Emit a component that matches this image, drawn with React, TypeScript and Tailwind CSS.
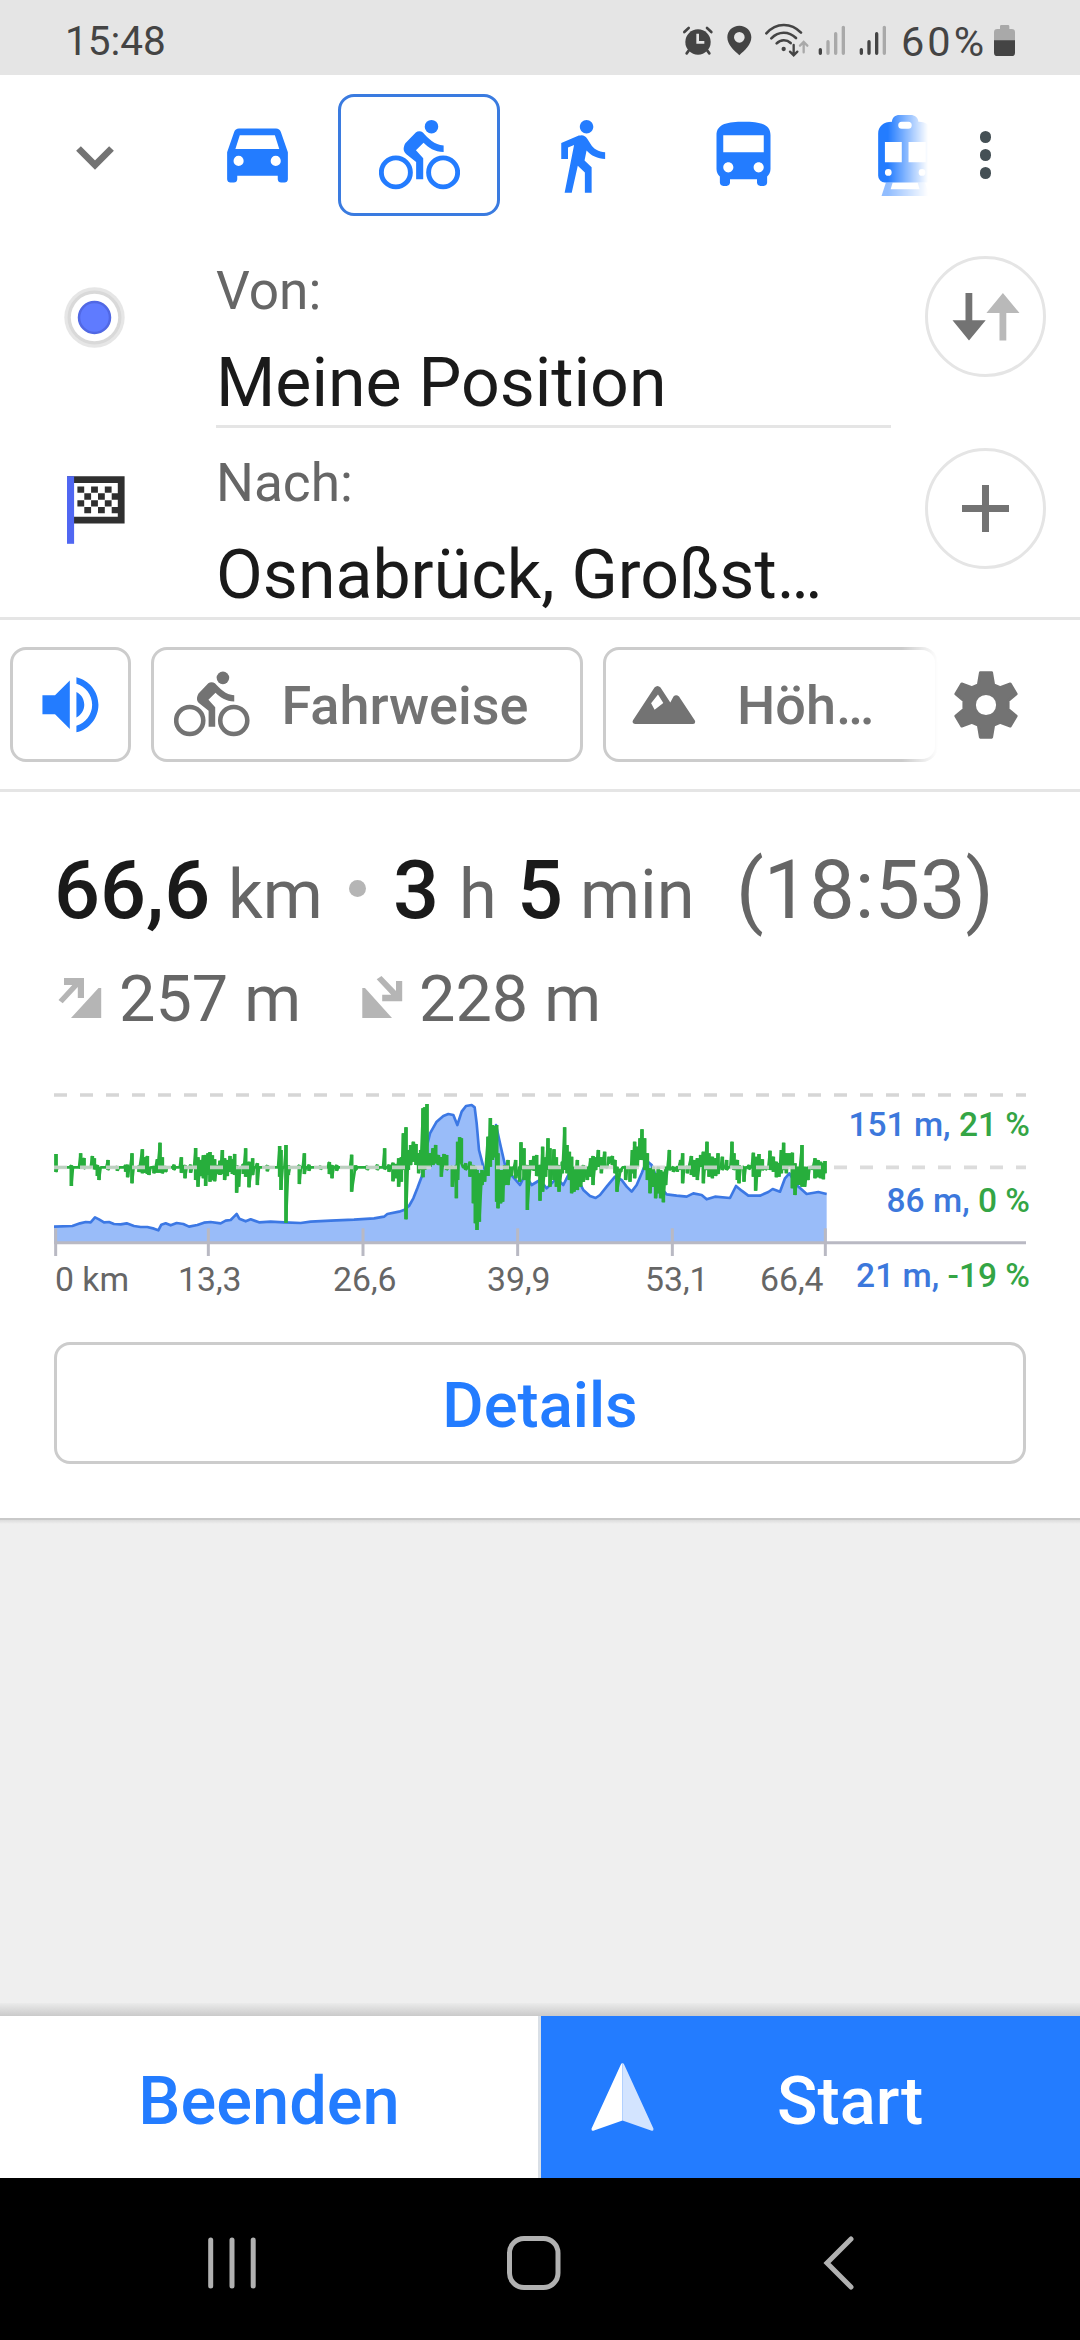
import type { ReactNode } from "react";
import clsx from "clsx";

const BLUE = "#237cff";
const GRAY = "#737373";

// ── Icons ─────────────────────────────────────────────────────────────────────
function Icon({ children, size = 81, color = BLUE }: { children: ReactNode; size?: number; color?: string }) {
  return (
    <svg width={size} height={size} viewBox="0 0 24 24" fill={color} className="shrink-0">
      {children}
    </svg>
  );
}

function CarIcon() {
  return (
    <Icon>
      <path
        fillRule="evenodd"
        d="M18.92 5.01C18.72 4.42 18.16 4 17.5 4h-11c-.66 0-1.21.42-1.42 1.01L3 11v8c0 .55.45 1 1 1h1c.55 0 1-.45 1-1v-1h12v1c0 .55.45 1 1 1h1c.55 0 1-.45 1-1v-8l-2.08-5.99zM6.4 15.1a1.5 1.5 0 1 1 0-3 1.5 1.5 0 0 1 0 3zm11 0a1.5 1.5 0 1 1 0-3 1.5 1.5 0 0 1 0 3zM5.45 10.1 6.75 6h10.4l1.3 4.1z"
      />
    </Icon>
  );
}

function BikeIcon({ size, color }: { size?: number; color?: string }) {
  return (
    <Icon size={size} color={color}>
      <circle cx="5" cy="17" r="4.3" fill="none" stroke={color ?? BLUE} strokeWidth="1.45" />
      <circle cx="19" cy="17" r="4.3" fill="none" stroke={color ?? BLUE} strokeWidth="1.45" />
      <circle cx="15.55" cy="3.45" r="2" />
      <path d="M10.9 5.2c.6-.5 1.5-.5 2.1 0 1.6 1.7 3.4 3.7 6.15 3.8v1.96c-2.7 0-4.5-1.35-5.95-2.76l-2.25 2.25 2.15 2.35V19H11v-5.1l-2.9-2.3c-1-.8-1-1.9-.3-3.2z" />
    </Icon>
  );
}

function WalkIcon() {
  return (
    <Icon>
      <path d="M13.5 5.5c1.1 0 2-.9 2-2s-.9-2-2-2-2 .9-2 2 .9 2 2 2zM9.8 8.9L7 23h2.1l1.8-8 2.1 2v6h2v-7.5l-2.1-2 .6-3C14.8 12 16.8 13 19 13v-2c-1.9 0-3.5-1-4.3-2.4l-1-1.6c-.4-.6-1-1-1.7-1-.3 0-.5.1-.8.1L6 8.3V13h2V9.6l1.8-.7z" />
    </Icon>
  );
}

function BusIcon() {
  return (
    <Icon>
      <path d="M4 16c0 .88.39 1.67 1 2.22V20c0 .55.45 1 1 1h1c.55 0 1-.45 1-1v-1h8v1c0 .55.45 1 1 1h1c.55 0 1-.45 1-1v-1.78c.61-.55 1-1.34 1-2.22V6c0-3.5-3.58-4-8-4s-8 .5-8 4v10zm3.5 1c-.83 0-1.5-.67-1.5-1.5S6.67 14 7.5 14s1.5.67 1.5 1.5S8.33 17 7.5 17zm9 0c-.83 0-1.5-.67-1.5-1.5s.67-1.5 1.5-1.5 1.5.67 1.5 1.5-.67 1.5-1.5 1.5zm1.5-6H6V6h12v5z" />
    </Icon>
  );
}

function TramIcon() {
  return (
    <Icon>
      <path d="M6.2 20 4.9 24h14.2l-1.3-4h-2.2l.6 2H7.6l.6-2z" opacity=".5" />
      <path
        fillRule="evenodd"
        d="M8 2C8 .8 9 0 10.2 0h3.3c1.2 0 2.3.8 2.3 2H16c2.4 0 4 1.6 4 4v12a2 2 0 0 1-2 2H5.9a2 2 0 0 1-2-2V5.5C3.9 3.4 5.5 2 8 2zM10.9 2a1 1 0 0 0 0 2.1h1.9a1 1 0 0 0 0-2.1zM5.9 8v6h5V8zm7 0v6H18V8zM6.9 16a1 1 0 1 0 0 2 1 1 0 0 0 0-2zm10 0a1 1 0 1 0 0 2 1 1 0 0 0 0-2z"
      />
    </Icon>
  );
}

function StatusIcons() {
  return (
    <svg width="207" height="36" viewBox="125 67 621 108" className="shrink-0">
      {/* alarm */}
      <g stroke="#444" strokeLinecap="round" fill="none">
        <path d="M132 97 145 85M213 97 200 85" strokeWidth="8" />
        <path d="M145 153 139 161M201 153 207 161" strokeWidth="8" />
      </g>
      <circle cx="173" cy="127" r="38" fill="#444" />
      <path d="M172 102v26h20" fill="none" stroke="#e5e5e5" strokeWidth="8" />
      {/* location */}
      <path
        fill="#444"
        fillRule="evenodd"
        d="M297 78c-20 0-36 15-36 35 0 23 20 39 36 54 16-15 36-31 36-54 0-20-16-35-36-35zm0 19a16 16 0 1 1 0 32 16 16 0 0 1 0-32z"
      />
      {/* wifi */}
      <g fill="none" stroke="#444" strokeWidth="8" strokeLinecap="round">
        <path d="M378 101C408 68 452 68 482 99" />
        <path d="M393 116C415 94 445 94 467 115" />
        <path d="M409 131C421 119 439 119 451 130" />
        <path d="M460 136v28M449 156l11 11 11-11" strokeWidth="7" />
        <path d="M490 158v-30M479 138l11-11 11 11" stroke="#a9a9a9" strokeWidth="7" />
      </g>
      <circle cx="430" cy="148" r="6.5" fill="#444" />
      {/* signal strength, both sims */}
      <g strokeWidth="10" strokeLinecap="round">
        <path d="M540 150v11M663 150v11M686 126v35M709 102v59" stroke="#444" />
        <path d="M563 126v35M586 102v59M609 83v78M732 83v78" stroke="#a9a9a9" />
      </g>
    </svg>
  );
}

function BatteryIcon() {
  return (
    <svg width="21" height="31" viewBox="0 0 63 93" className="shrink-0">
      <path d="M0 22q0-10 10-10h8V4q0-4 4-4h20q4 0 4 4v8h7q10 0 10 10v26H0z" fill="#a9a9a9" />
      <path d="M0 46h63v37q0 10-10 10H10Q0 93 0 83z" fill="#444" />
    </svg>
  );
}

// ── Elevation profile ─────────────────────────────────────────────────────────
const ELEVATION: [number, number][] = [
  [0, 470], [55, 468], [78, 460], [95, 456], [110, 457], [123, 442], [135, 448], [150, 457], [165, 456], [180, 462],
  [200, 463], [218, 460], [240, 468], [260, 471], [280, 471], [300, 476], [313, 481], [322, 464], [335, 460],
  [350, 466], [368, 459], [388, 462], [405, 470], [430, 465], [450, 458], [470, 456], [500, 460], [515, 452],
  [530, 450], [540, 440], [548, 432], [556, 446], [575, 454], [590, 448], [615, 457], [650, 455], [690, 457],
  [740, 459], [770, 455], [830, 452], [900, 449], [960, 445], [990, 440], [1000, 432], [1035, 425], [1050, 420],
  [1065, 408], [1078, 385], [1090, 355], [1103, 320], [1116, 240], [1128, 190], [1148, 155], [1168, 138],
  [1183, 132], [1198, 135], [1210, 165], [1223, 125], [1236, 108], [1253, 105], [1262, 112], [1268, 160],
  [1275, 240], [1288, 290], [1296, 305], [1306, 280], [1316, 220], [1326, 165], [1338, 220], [1353, 285],
  [1368, 310], [1398, 345], [1413, 315], [1433, 345], [1458, 330], [1478, 355], [1508, 325], [1528, 345],
  [1548, 305], [1568, 320], [1588, 360], [1608, 378], [1625, 384], [1638, 375], [1658, 350], [1683, 320],
  [1703, 330], [1718, 350], [1733, 365], [1748, 345], [1763, 310], [1778, 272], [1793, 285], [1818, 350],
  [1838, 373], [1868, 377], [1898, 380], [1918, 370], [1943, 375], [1958, 388], [1983, 380], [2028, 384],
  [2046, 348], [2063, 362], [2083, 377], [2118, 377], [2143, 366], [2156, 357], [2178, 365], [2193, 325],
  [2206, 310], [2228, 345], [2258, 372], [2293, 366], [2318, 372],
];

// x, highest and lowest slope at that point
const SLOPE: [number, number, number][] = [
  [6, 252, 306], [52, 286, 348], [80, 250, 296], [90, 264, 296], [115, 258, 292], [121, 265, 298], [130, 285, 318],
  [135, 290, 330], [162, 270, 300], [190, 290, 302], [215, 285, 305], [221, 284, 322], [234, 250, 340],
  [255, 288, 306], [265, 238, 310], [271, 262, 308], [280, 258, 312], [285, 290, 315], [300, 290, 310],
  [310, 268, 308], [318, 218, 308], [325, 262, 310], [335, 288, 306], [360, 284, 300], [382, 262, 308],
  [393, 285, 325], [410, 284, 308], [425, 234, 330], [432, 262, 350], [440, 270, 318], [448, 256, 325],
  [455, 255, 348], [462, 250, 315], [468, 246, 335], [475, 256, 330], [482, 268, 334], [490, 285, 312],
  [498, 272, 315], [505, 240, 312], [512, 265, 330], [520, 270, 318], [528, 258, 305], [535, 268, 312],
  [542, 252, 315], [548, 285, 368], [554, 295, 350], [568, 282, 312], [575, 235, 320], [585, 275, 352],
  [596, 265, 315], [610, 280, 345], [640, 286, 304], [677, 228, 320], [681, 240, 360], [696, 225, 458],
  [703, 285, 315], [736, 285, 342], [751, 250, 312], [765, 284, 302], [800, 288, 298], [826, 276, 312],
  [834, 285, 325], [848, 285, 302], [893, 254, 365], [905, 286, 300], [940, 288, 300], [970, 284, 300],
  [992, 235, 298], [1005, 284, 305], [1017, 278, 334], [1027, 282, 325], [1034, 265, 350], [1042, 262, 335],
  [1048, 190, 300], [1056, 172, 448], [1063, 240, 300], [1070, 225, 285], [1078, 215, 275], [1086, 222, 285],
  [1094, 250, 310], [1100, 240, 300], [1107, 115, 322], [1112, 112, 300], [1119, 102, 290], [1128, 250, 290],
  [1137, 235, 285], [1145, 225, 280], [1153, 255, 285], [1162, 262, 320], [1170, 252, 290], [1178, 255, 300],
  [1195, 290, 350], [1207, 285, 385], [1211, 215, 330], [1217, 202, 275], [1222, 205, 280], [1235, 280, 300],
  [1248, 275, 320], [1258, 285, 400], [1264, 290, 460], [1269, 300, 480], [1276, 310, 455], [1284, 300, 345],
  [1292, 305, 335], [1302, 200, 318], [1309, 144, 290], [1315, 165, 270], [1322, 168, 262], [1328, 165, 395],
  [1332, 250, 415], [1340, 300, 400], [1346, 300, 395], [1352, 285, 345], [1362, 270, 345], [1372, 290, 318],
  [1385, 270, 325], [1397, 290, 335], [1401, 217, 300], [1410, 235, 330], [1420, 285, 420], [1430, 270, 300],
  [1440, 258, 302], [1448, 255, 318], [1458, 285, 392], [1466, 230, 365], [1475, 262, 320], [1482, 205, 300],
  [1488, 235, 350], [1500, 238, 330], [1507, 262, 350], [1515, 285, 365], [1525, 275, 310], [1532, 172, 300],
  [1539, 225, 310], [1546, 245, 330], [1553, 260, 370], [1560, 290, 365], [1570, 270, 360], [1580, 290, 350],
  [1588, 285, 335], [1600, 290, 330], [1610, 265, 320], [1617, 258, 345], [1625, 262, 300], [1633, 240, 290],
  [1642, 262, 310], [1652, 245, 290], [1665, 260, 280], [1675, 258, 285], [1683, 270, 310], [1689, 290, 365],
  [1700, 296, 306], [1715, 290, 330], [1728, 295, 335], [1735, 240, 310], [1742, 215, 325], [1750, 230, 290],
  [1758, 205, 270], [1764, 178, 270], [1772, 205, 300], [1780, 250, 330], [1788, 295, 370], [1798, 290, 350],
  [1805, 310, 385], [1813, 290, 370], [1820, 300, 385], [1828, 305, 397], [1835, 290, 345], [1846, 240, 300],
  [1858, 290, 305], [1870, 290, 305], [1880, 270, 300], [1886, 250, 340], [1900, 290, 310], [1912, 258, 315],
  [1920, 270, 320], [1930, 265, 330], [1940, 255, 290], [1948, 245, 340], [1959, 215, 300], [1965, 250, 320],
  [1975, 260, 325], [1985, 265, 318], [1992, 250, 312], [2005, 260, 300], [2018, 270, 300], [2034, 215, 285],
  [2040, 250, 300], [2050, 270, 330], [2055, 285, 340], [2070, 290, 335], [2085, 285, 298], [2098, 248, 320],
  [2105, 260, 362], [2115, 252, 320], [2125, 268, 300], [2135, 290, 300], [2148, 242, 300], [2158, 260, 305],
  [2167, 275, 322], [2175, 280, 320], [2182, 240, 310], [2189, 218, 300], [2197, 250, 310], [2205, 250, 290],
  [2215, 248, 355], [2223, 280, 375], [2233, 290, 345], [2244, 225, 350], [2252, 290, 350], [2262, 290, 330],
  [2275, 290, 300], [2283, 265, 325], [2292, 270, 322], [2300, 275, 325], [2308, 280, 328], [2313, 273, 310],
];

const elevationLine = ELEVATION.map(([x, y]) => `${x},${y}`).join(" ");

const slopeLine = SLOPE.map(([x, top, bottom], i) => {
  const next = SLOPE[i + 1];
  const points = `${x},${top} ${x},${bottom}`;
  // fall back to the zero line in the quiet parts
  if (next && next[0] - x > 12) return `${points} ${x + 5},292 ${next[0] - 5},292`;
  return points;
}).join(" ");

const slopePeaks = SLOPE.map(([x, top, bottom]) => `M${x} ${top}V${bottom}`).join("");

const TICKS = [5, 463, 927, 1391, 1855, 2314];

function ElevationChart() {
  return (
    <svg width="972" height="180" viewBox="0 30 2916 540" className="block">
      <polygon points={`0,518 ${elevationLine} 2318,518`} fill="#99bcf9" />
      <polyline points={elevationLine} fill="none" stroke="#3c78e4" strokeWidth="8" strokeLinejoin="round" />
      <polyline points={slopeLine} fill="none" stroke="#27ae3c" strokeWidth="8" strokeLinejoin="bevel" />
      <path d={slopePeaks} stroke="#27ae3c" strokeWidth="11" />
      <g stroke="#d6d6d6" strokeWidth="11" strokeDasharray="39 39">
        <path d="M0 75H2916" />
        <path d="M0 292H2916" strokeOpacity=".85" />
      </g>
      <path d="M0 518H2916" stroke="#b9b9c3" strokeWidth="9" />
      {TICKS.map((x) => (
        <path key={x} d={`M${x} 475V558`} stroke="#b9b9c3" strokeWidth="9" />
      ))}
    </svg>
  );
}

// ── Building blocks ───────────────────────────────────────────────────────────
function Tab({ active, children }: { active?: boolean; children: ReactNode }) {
  return (
    <div
      className={clsx(
        "flex h-[122px] w-[162px] shrink-0 items-center justify-center",
        active && "rounded-[16px] border-[3px] border-[#3a7be0]",
      )}
    >
      {children}
    </div>
  );
}

function RoundButton({ children }: { children: ReactNode }) {
  return (
    <div className="flex size-[121px] items-center justify-center rounded-full border-[3px] border-[#e5e5e5]">
      {children}
    </div>
  );
}

function ScaleLabel({ height, slope }: { height: string; slope: string }) {
  return (
    <div className="text-right text-[33.5px] leading-[34px] font-medium whitespace-pre text-[#3c78dc]">
      {height}, <span className="text-[#34a545]">{slope}</span>
    </div>
  );
}

export default function App() {
  return (
    <div className="flex h-[2340px] w-[1080px] flex-col overflow-hidden bg-white font-['Roboto',sans-serif] text-[#666]">
      {/* ── Status bar ── */}
      <div className="flex h-[75px] shrink-0 items-center bg-[#e5e5e5] pr-[65px] pl-[65px] text-[40.5px] leading-none text-[#444]">
        <span className="mt-[7px] flex-1">15:48</span>
        <div className="mt-[5px] flex items-center">
          <StatusIcons />
          <span className="mt-[3px] ml-[12px] w-[93px] text-[41.5px] tracking-[3px]">60%</span>
          <BatteryIcon />
        </div>
      </div>

      {/* ── Travel modes ── */}
      <div className="mt-[19px] flex h-[122px] shrink-0 items-center">
        <div className="flex w-[176px] justify-center pl-[13px]">
          <svg width="40" height="26" viewBox="0 0 40 26" className="mt-[6px]">
            <path d="M3.5 3.5 20 20 36.5 3.5" fill="none" stroke={GRAY} strokeWidth="6.7" />
          </svg>
        </div>
        <div className="flex w-[752px] overflow-hidden [mask-image:linear-gradient(to_right,#000_712px,transparent_752px)]">
          <Tab>
            <CarIcon />
          </Tab>
          <Tab active>
            <BikeIcon />
          </Tab>
          <Tab>
            <WalkIcon />
          </Tab>
          <Tab>
            <BusIcon />
          </Tab>
          <Tab>
            <TramIcon />
          </Tab>
        </div>
        <div className="ml-[51.5px] flex flex-col gap-[6.5px]">
          <span className="size-[11.5px] rounded-full bg-[#455055]" />
          <span className="size-[11.5px] rounded-full bg-[#455055]" />
          <span className="size-[11.5px] rounded-full bg-[#455055]" />
        </div>
      </div>

      {/* ── From / to ── */}
      <div className="flex h-[212px] shrink-0">
        <div className="w-[216px] pt-[71px] pl-[64px]">
          <svg width="61" height="61" viewBox="0 0 61 61">
            <circle cx="30.5" cy="30.5" r="30.2" fill="#e6e6e6" />
            <circle cx="30.5" cy="30.5" r="27" fill="#d9d9d9" />
            <circle cx="30.5" cy="30.5" r="23.7" fill="#fff" />
            <circle cx="30.5" cy="30.5" r="15.5" fill="#5f7bff" stroke="#5168e4" strokeWidth="2.5" />
          </svg>
        </div>
        <div className="w-[675px] border-b-[3px] border-[#e5e5e5] pt-[48px]">
          <div className="text-[53.2px] leading-[54px]">Von:</div>
          <div className="mt-[31px] text-[68px] leading-none text-[#1a1a1a]">Meine Position</div>
        </div>
        <div className="mt-[40px] ml-[34px]">
          <RoundButton>
            <svg width="68" height="48" viewBox="0 0 68 48">
              <path d="M13.5 0h6.8v27.3h13.4L17 47.5.5 27.3h13z" fill={GRAY} />
              <path d="M47.5 47.5h6.8V20h13.2L50.9 0 34.4 20h13.1z" fill="#b9b9b9" />
            </svg>
          </RoundButton>
        </div>
      </div>
      <div className="flex h-[192px] shrink-0 border-b-[3px] border-[#e5e5e5]">
        <div className="w-[216px] pt-[47.5px] pl-[67px]">
          <svg width="58" height="68" viewBox="0 0 58 68">
            <path d="M3.5 3.6h50.7v40.5H3.5z" fill="#fff" stroke="#2f2f2f" strokeWidth="6.8" />
            <path d="M0 .2h7.1V67.8H0z" fill="#5067f2" />
            <g stroke="#2f2f2f" strokeWidth="6.3" strokeDasharray="6.8 6.9">
              <path d="M10.4 13.7H51M10.4 27.3H51M17.3 20.5H51M17.3 34.1H51" />
            </g>
          </svg>
        </div>
        <div className="w-[675px] pt-[27.5px]">
          <div className="text-[53.2px] leading-[54px]">Nach:</div>
          <div className="mt-[31px] text-[68px] leading-none whitespace-nowrap text-[#1a1a1a]">
            Osnabrück, Großst…
          </div>
        </div>
        <div className="mt-[20px] ml-[34px]">
          <RoundButton>
            <svg width="47" height="47" viewBox="0 0 47 47">
              <path d="M0 23.5H47M23.5 0V47" stroke={GRAY} strokeWidth="7" />
            </svg>
          </RoundButton>
        </div>
      </div>

      {/* ── Route options ── */}
      <div className="flex h-[172px] shrink-0 items-center border-b-[3px] border-[#e5e5e5] pl-[10px] text-[54px] leading-none font-medium text-[#737373]">
        <div className="flex w-[928px] shrink-0 gap-[20px] overflow-hidden [mask-image:linear-gradient(to_right,#000_892px,transparent_928px)]">
          <div className="flex h-[115px] w-[121px] shrink-0 items-center justify-center rounded-[16px] border-[3px] border-[#ccc]">
            <Icon size={75.5}>
              <path d="M3 9v6h4l4.7 4.7V4.3L7 9H3zm13.3 3c0-1.77-1-3.29-2.5-4.03v8.05c1.5-.73 2.5-2.25 2.5-4.02zM13.8 3.23v2.06c2.89.86 5 3.54 5 6.71s-2.11 5.85-5 6.71v2.06c4.01-.91 7-4.49 7-8.77s-2.99-7.86-7-8.77z" />
            </Icon>
          </div>
          <div className="flex h-[115px] w-[432px] shrink-0 items-center gap-[32px] rounded-[16px] border-[3px] border-[#ccc] pl-[20px]">
            <BikeIcon size={75.5} color={GRAY} />
            <span className="mt-[3px]">Fahrweise</span>
          </div>
          <div className="flex h-[115px] w-[335px] shrink-0 items-center gap-[41px] rounded-[16px] border-[3px] border-[#ccc] pl-[26px]">
            <svg width="64" height="38" viewBox="0 0 64 38" fill={GRAY}>
              <path
                fillRule="evenodd"
                d="M22.5 1.5q3-3 6 0L38.3 16.5 41.5 10.5q2.5-2.5 5.5 0L63 34.8q.8 3-2 3.2H3q-3.5-.5-2-3.7zM26 8.6l-6.9 8.6 3.5 6.5 8.7-6.7z"
              />
            </svg>
            <span className="mt-[3px]">Höh…</span>
          </div>
        </div>
        <svg width="66" height="70" viewBox="-9.8 -10.3 19.6 20.6" className="ml-[15px] shrink-0">
          <path
            fill={GRAY}
            stroke={GRAY}
            strokeWidth=".8"
            strokeLinejoin="round"
            fillRule="evenodd"
            d="M-1.7-9.6H1.7L2.3-6 4.2-5.2 7.2-6.3 9-3.3 6.6-1.3V1.3L9 3.3 7.2 6.3 4.2 5.2 2.3 6 1.7 9.6H-1.7L-2.3 6-4.2 5.2-7.2 6.3-9 3.3-6.6 1.3V-1.3L-9-3.3-7.2-6.3-4.2-5.2-2.3-6zM0-3.4a3.4 3.4 0 1 0 0 6.8 3.4 3.4 0 0 0 0-6.8z"
          />
        </svg>
      </div>

      {/* ── Summary ── */}
      <div className="h-[728px] shrink-0 border-b-2 border-[#c9c9c9] px-[54px] pt-[58px]">
        <div className="flex h-[81px] items-baseline text-[68.5px] leading-[81px] whitespace-nowrap">
          <span className="w-[174px] text-[81px] font-medium text-[#1a1a1a]">66,6</span>
          <span className="w-[121px]">km</span>
          <span className="mr-[27px] size-[17px] -translate-y-[21px] rounded-full bg-[#b5b5b5]" />
          <span className="w-[66px] text-[81px] font-medium text-[#1a1a1a]">3</span>
          <span className="w-[58px]">h</span>
          <span className="w-[63px] text-[81px] font-medium text-[#1a1a1a]">5</span>
          <span className="w-[156px]">min</span>
          <span className="text-[81px]">(18:53)</span>
        </div>
        <div className="mt-[36px] flex h-[64px] items-center text-[64.8px] leading-none whitespace-nowrap">
          <svg width="44" height="44" viewBox="58 972 44 44" fill="#b5b5b5" className="-mt-[4px] ml-[4px]">
            <path d="M64 975h20v20h-6.2v-11L62.7 1000.3 58.5 997 72.3 982H64zM101.2 985v30H71l27.5-30z" />
          </svg>
          <span className="ml-[17px] w-[241px]">257 m</span>
          <svg width="44" height="44" viewBox="360 972 44 44" fill="#b5b5b5" className="-mt-[4px]">
            <path d="M381.5 973 396 988V978h6.2v20.3h-20v-6.6h9L376.7 976.3zM362.3 985h2.7l27 30h-29.7z" />
          </svg>
          <span className="ml-[15px]">228 m</span>
        </div>

        <div className="relative mt-[49px] h-[262px]">
          <ElevationChart />
          <div className="flex pt-[3px] text-[33.75px] leading-none whitespace-nowrap">
            <span className="w-[124px] pl-[1px]">0 km</span>
            <span className="w-[155px]">13,3</span>
            <span className="w-[154px]">26,6</span>
            <span className="w-[158px]">39,9</span>
            <span className="w-[115px]">53,1</span>
            <span>66,4</span>
          </div>
          <div className="absolute top-[28px] right-[-4px] flex flex-col gap-[41.5px]">
            <ScaleLabel height="151 m" slope="21 %" />
            <ScaleLabel height="86 m" slope="0 %" />
            <ScaleLabel height="21 m" slope="-19 %" />
          </div>
        </div>

        <div className="flex h-[122px] items-center justify-center rounded-[16px] border-[3px] border-[#ccc] pt-[5px] text-[63.3px] leading-none font-medium text-[#237cff]">
          Details
        </div>
      </div>

      {/* ── Empty area ── */}
      <div className="flex flex-1 flex-col justify-between bg-[#efefef]">
        <div className="h-[4px] bg-linear-to-b from-[#dcdcdc] to-[#efefef]" />
        <div className="h-[13px] bg-linear-to-b from-[#ebebeb] to-[#cacaca]" />
      </div>

      {/* ── Actions ── */}
      <div className="flex h-[162px] shrink-0 text-[66.8px] leading-none font-medium">
        <div className="flex w-[541px] items-center justify-center border-r-[3px] border-[#d9dfe6] pt-[8px] text-[#237cff]">
          Beenden
        </div>
        <div className="flex flex-1 items-center bg-[#237cff] pl-[50px] text-white">
          <svg width="63" height="68" viewBox="0 0 63 68">
            <path d="M31.5 0q-1.5 0-2.1 2.5L.6 65.5q-.4 3 2.4 2L31.5 57.5z" fill="#fff" />
            <path d="M31.5 0q1.5 0 2.1 2.5L62.4 65.5q.4 3-2.4 2L31.5 57.5z" fill="#d3e4ff" />
          </svg>
          <span className="mt-[8px] ml-[123px]">Start</span>
        </div>
      </div>

      {/* ── System navigation ── */}
      <div className="flex h-[162px] shrink-0 bg-black pt-[57px] pl-[207px]">
        <svg width="50" height="56" viewBox="0 0 50 56" stroke="#b1b1b1" strokeWidth="5" strokeLinecap="round">
          <path d="M3.7 5V51M25 5V51M46.2 5V51" />
        </svg>
        <svg width="56" height="56" viewBox="0 0 56 56" fill="none" stroke="#b1b1b1" strokeWidth="5" className="ml-[249px]">
          <rect x="3.5" y="3.5" width="48.5" height="49" rx="14.5" />
        </svg>
        <svg width="34" height="56" viewBox="0 0 34 56" fill="none" stroke="#b1b1b1" strokeWidth="5" strokeLinecap="round" className="ml-[259px]">
          <path d="M30 4 6 28 30 52" />
        </svg>
      </div>
    </div>
  );
}
